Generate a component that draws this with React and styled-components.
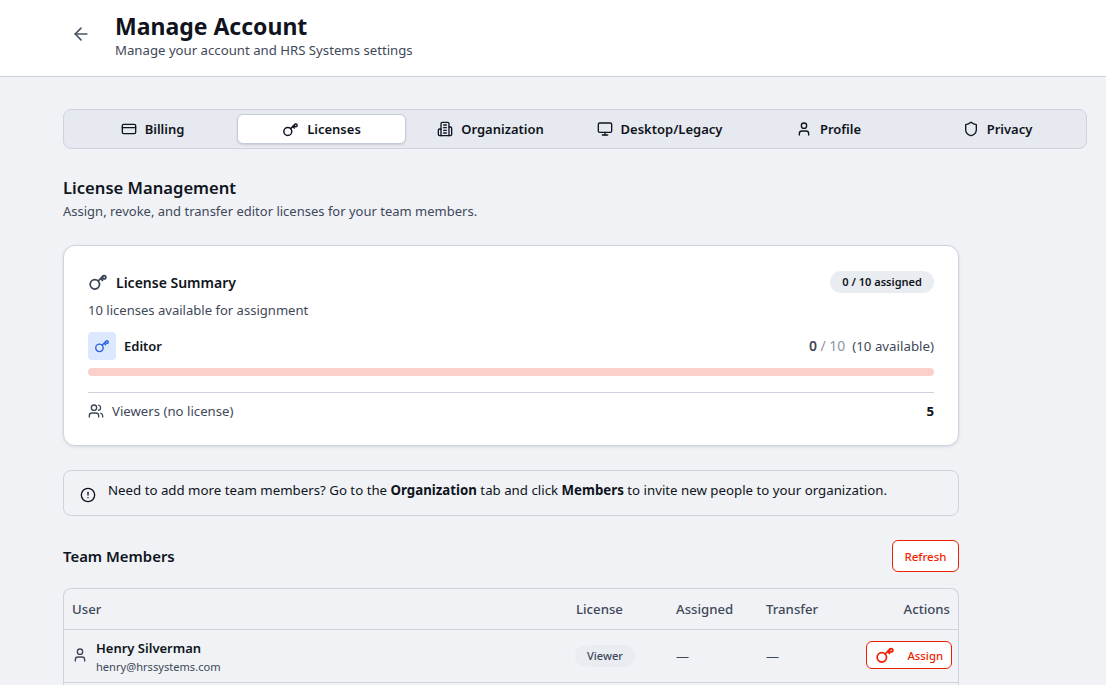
import React from 'react';
import styled, { createGlobalStyle } from 'styled-components';
import {
  ArrowLeft,
  CircleAlert,
  CreditCard,
  Monitor,
  Shield,
  User,
  Users,
} from 'lucide-react';

const GlobalStyle = createGlobalStyle`
  html, body {
    margin: 0;
    height: 685px;
    overflow: hidden;
    background: #f0f2f6;
    font-family: "Noto Sans", "Open Sans", sans-serif;
    color: #0f1420;
  }
`;

function KeyIcon({ size = 20 }) {
  return (
    <svg width={size} height={size} viewBox="0 0 24 24" fill="none" stroke="currentColor" strokeWidth="2.1" strokeLinecap="round" strokeLinejoin="round">
      <circle cx="8.2" cy="14.8" r="5.6" />
      <path d="m12.2 10.8 5.6-5.6" />
      <circle cx="19.4" cy="6.2" r="2" />
      <path d="m15.2 7.8 2.2 2.2" />
    </svg>
  );
}

function BuildingIcon({ size = 16 }) {
  return (
    <svg width={size} height={size} viewBox="0 0 24 24" fill="none" stroke="currentColor" strokeWidth="2" strokeLinecap="round" strokeLinejoin="round">
      <path d="M6 22V4a2 2 0 0 1 2-2h8a2 2 0 0 1 2 2v18Z" />
      <path d="M6 12H4a2 2 0 0 0-2 2v6a2 2 0 0 0 2 2h2" />
      <path d="M18 9h2a2 2 0 0 1 2 2v9a2 2 0 0 1-2 2h-2" />
      <path d="M10 6h4" />
      <path d="M10 10h4" />
      <path d="M10 14h4" />
      <path d="M10 18h4" />
    </svg>
  );
}

const tabs = [
  { label: 'Billing', icon: <CreditCard size={16} /> },
  { label: 'Licenses', icon: <KeyIcon size={17} />, active: true },
  { label: 'Organization', icon: <BuildingIcon size={16} /> },
  { label: 'Desktop/Legacy', icon: <Monitor size={16} /> },
  { label: 'Profile', icon: <User size={16} /> },
  { label: 'Privacy', icon: <Shield size={16} /> },
];

export default function App() {
  return (
    <>
      <GlobalStyle />
      <Header>
        <BackButton>
          <ArrowLeft size={20} />
        </BackButton>
        <div>
          <Title>Manage Account</Title>
          <Subtitle>Manage your account and HRS Systems settings</Subtitle>
        </div>
      </Header>
      <Main>
        <TabBar>
          {tabs.map((tab) => (
            <Tab key={tab.label} $active={tab.active}>
              {tab.icon}
              {tab.label}
            </Tab>
          ))}
        </TabBar>

        <Content>
          <SectionTitle>License Management</SectionTitle>
          <SectionText>Assign, revoke, and transfer editor licenses for your team members.</SectionText>

          <Card>
            <CardTop>
              <CardTitle>
                <KeyIcon size={20} />
                License Summary
              </CardTitle>
              <CountBadge>0 / 10 assigned</CountBadge>
            </CardTop>
            <CardText>10 licenses available for assignment</CardText>
            <EditorRow>
              <EditorName>
                <IconTile>
                  <KeyIcon size={16} />
                </IconTile>
                Editor
              </EditorName>
              <Usage>
                <UsageCount>0</UsageCount> <Muted>/ 10</Muted> &nbsp;(10 available)
              </Usage>
            </EditorRow>
            <Progress />
            <ViewerRow>
              <ViewerLabel>
                <Users size={16} />
                Viewers (no license)
              </ViewerLabel>
              <strong>5</strong>
            </ViewerRow>
          </Card>

          <Notice>
            <CircleAlert size={16} />
            <span>
              Need to add more team members? Go to the <b>Organization</b> tab and click <b>Members</b> to invite new people to your organization.
            </span>
          </Notice>

          <MembersHead>
            <MembersTitle>Team Members</MembersTitle>
            <RefreshButton>Refresh</RefreshButton>
          </MembersHead>

          <Table>
            <HeadRow>
              <span>User</span>
              <span>License</span>
              <span>Assigned</span>
              <span>Transfer</span>
              <RightCell>Actions</RightCell>
            </HeadRow>
            <BodyRow>
              <UserCell>
                <User size={16} />
                <div>
                  <UserName>Henry Silverman</UserName>
                  <UserEmail>henry@hrssystems.com</UserEmail>
                </div>
              </UserCell>
              <div>
                <LicenseChip>Viewer</LicenseChip>
              </div>
              <span>—</span>
              <span>—</span>
              <RightCell>
                <AssignButton>
                  <KeyIcon size={20} />
                  Assign
                </AssignButton>
              </RightCell>
            </BodyRow>
          </Table>
        </Content>
      </Main>
    </>
  );
}

const Header = styled.header`
  display: flex;
  align-items: flex-start;
  height: 76px;
  padding-left: 71px;
  background: #fff;
  border-bottom: 1px solid #cdd3df;
`;

const BackButton = styled.div`
  display: flex;
  width: 20px;
  height: 20px;
  margin-top: 24px;
  margin-right: 24px;
  color: #4a5365;
`;

const Title = styled.h1`
  margin: 10px 0 0;
  font-size: 23px;
  line-height: 32px;
  font-weight: 700;
`;

const Subtitle = styled.p`
  margin: 0;
  font-size: 13.2px;
  line-height: 16px;
  color: #3f4859;
`;

const Main = styled.main`
  padding: 32px 19px 0 63px;
`;

const TabBar = styled.nav`
  display: grid;
  grid-template-columns: repeat(6, 1fr);
  box-sizing: border-box;
  height: 40px;
  padding: 4px;
  background: #e6e9ef;
  border: 1px solid #cdd3df;
  border-radius: 8px;
`;

const Tab = styled.div`
  display: flex;
  align-items: center;
  justify-content: center;
  gap: 8px;
  font-size: 13px;
  font-weight: 600;
  color: #0f1420;
  border-radius: 6px;
  background: ${(p) => (p.$active ? '#fff' : 'transparent')};
  border: 1px solid ${(p) => (p.$active ? '#c5ccd9' : 'transparent')};
  box-shadow: ${(p) => (p.$active ? '0 1px 2px rgba(30, 40, 60, 0.14)' : 'none')};
`;

const Content = styled.div`
  width: 896px;
  padding-top: 28px;
`;

const SectionTitle = styled.h2`
  margin: 0;
  font-size: 16.6px;
  line-height: 22px;
  font-weight: 600;
`;

const SectionText = styled.p`
  margin: 3px 0 0;
  font-size: 13px;
  line-height: 18px;
  color: #3f4859;
`;

const Card = styled.section`
  box-sizing: border-box;
  height: 201px;
  margin-top: 25px;
  padding: 24px 24px 0;
  background: #fff;
  border: 1px solid #cdd3df;
  border-radius: 12px;
  box-shadow: 0 1px 3px rgba(30, 40, 60, 0.12);
`;

const CardTop = styled.div`
  display: flex;
  align-items: center;
  justify-content: space-between;
  height: 24px;
`;

const CardTitle = styled.h3`
  display: flex;
  align-items: center;
  gap: 8px;
  margin: 0;
  font-size: 14px;
  font-weight: 600;
  svg { color: #3a4356; }
`;

const CountBadge = styled.span`
  padding: 2px 12px;
  height: 22px;
  box-sizing: border-box;
  line-height: 18px;
  font-size: 11.05px;
  font-weight: 600;
  background: #e9ecf1;
  border-radius: 11px;
`;

const CardText = styled.p`
  margin: 7px 0 0;
  font-size: 13.05px;
  line-height: 18px;
  color: #3f4859;
`;

const EditorRow = styled.div`
  display: flex;
  align-items: center;
  justify-content: space-between;
  margin-top: 13px;
`;

const EditorName = styled.div`
  display: flex;
  align-items: center;
  gap: 8px;
  font-size: 13px;
  font-weight: 600;
`;

const IconTile = styled.div`
  display: flex;
  align-items: center;
  justify-content: center;
  width: 28px;
  height: 28px;
  border-radius: 4px;
  background: #dbe8fe;
  color: #2f62e0;
`;

const Usage = styled.div`
  margin-bottom: 2px;
  font-size: 13.3px;
  color: #3f4859;
`;

const UsageCount = styled.span`
  font-size: 14px;
  font-weight: 600;
`;

const Muted = styled.span`
  font-size: 14px;
  color: #8d96a8;
`;

const Progress = styled.div`
  height: 8px;
  margin-top: 8px;
  border-radius: 4px;
  background: #fbd0ca;
`;

const ViewerRow = styled.div`
  display: flex;
  align-items: center;
  justify-content: space-between;
  margin-top: 16px;
  padding-top: 9px;
  border-top: 1px solid #cdd3df;
  font-size: 13.2px;
  line-height: 18px;
`;

const ViewerLabel = styled.div`
  display: flex;
  align-items: center;
  gap: 8px;
  color: #3f4859;
`;

const Notice = styled.div`
  display: flex;
  align-items: flex-start;
  gap: 12px;
  box-sizing: border-box;
  height: 46px;
  margin-top: 24px;
  padding: 10px 16px 0;
  font-size: 13.27px;
  line-height: 18px;
  border: 1px solid #cdd3df;
  border-radius: 8px;
  svg { flex: none; margin-top: 6px; }
`;

const MembersHead = styled.div`
  display: flex;
  align-items: center;
  justify-content: space-between;
  margin-top: 24px;
`;

const MembersTitle = styled.h3`
  margin: 0;
  font-size: 14.9px;
  font-weight: 600;
`;

const RefreshButton = styled.button`
  width: 67px;
  height: 32px;
  padding: 0;
  font: inherit;
  font-size: 11.5px;
  font-weight: 500;
  color: #f01e00;
  background: #fff;
  border: 1px solid #f01e00;
  border-radius: 6px;
`;

const Table = styled.div`
  box-sizing: border-box;
  height: 97px;
  margin-top: 16px;
  border: 1px solid #cdd3df;
  border-bottom: none;
  border-radius: 8px 8px 0 0;
`;

const columns = '504px 100px 90px 90px 1fr';

const HeadRow = styled.div`
  display: grid;
  grid-template-columns: ${columns};
  align-items: center;
  height: 40px;
  padding: 0 8px;
  font-size: 13.2px;
  font-weight: 500;
  color: #3f4859;
  border-bottom: 1px solid #cdd3df;
`;

const BodyRow = styled.div`
  display: grid;
  grid-template-columns: ${columns};
  align-items: center;
  height: 52px;
  padding: 0 6px 0 8px;
  font-size: 13px;
  color: #3f4859;
  border-bottom: 1px solid #cdd3df;
`;

const RightCell = styled.div`
  display: flex;
  justify-content: flex-end;
`;

const UserCell = styled.div`
  display: flex;
  align-items: center;
  gap: 8px;
  padding-top: 2px;
  svg { margin-top: -4px; color: #3f4859; }
`;

const UserName = styled.div`
  font-size: 13px;
  line-height: 18px;
  font-weight: 600;
  color: #0f1420;
`;

const UserEmail = styled.div`
  margin-top: 2px;
  font-size: 11.1px;
  line-height: 16px;
  color: #3f4859;
`;

const LicenseChip = styled.span`
  display: inline-block;
  margin-left: -1px;
  padding: 0 12px;
  height: 22px;
  line-height: 22px;
  font-size: 11.1px;
  font-weight: 500;
  background: #e9ecf1;
  border-radius: 11px;
`;

const AssignButton = styled.button`
  display: flex;
  align-items: center;
  justify-content: space-between;
  box-sizing: border-box;
  width: 86px;
  height: 28px;
  margin-bottom: 2px;
  padding: 0 8px;
  font: inherit;
  font-size: 11.3px;
  font-weight: 500;
  color: #f01e00;
  background: #fff;
  border: 1px solid #f01e00;
  border-radius: 6px;
`;
